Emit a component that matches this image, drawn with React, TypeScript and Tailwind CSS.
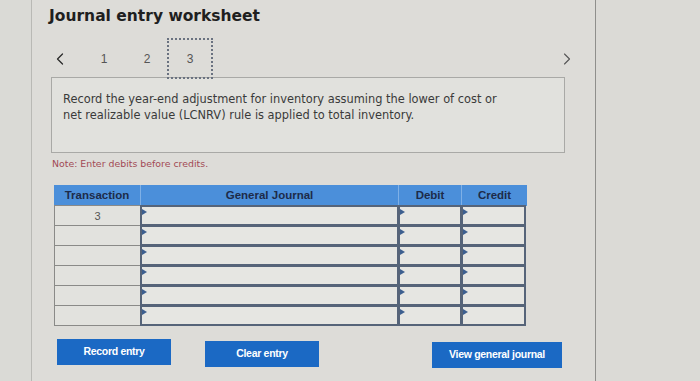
import { ChevronLeft, ChevronRight } from "lucide-react";

const rows = ["3", "", "", "", "", ""];

const Marker = () => (
  <span className="absolute left-0 top-[2px] w-0 h-0 border-y-[3px] border-y-transparent border-l-[5px] border-l-[#3d5f8f]" />
);

const InputCell = ({ w }: { w: string }) => (
  <div className={`relative ${w} h-full border-2 border-[#566479] bg-[#e6e6e2] -ml-[1px]`}>
    <Marker />
  </div>
);

export default function App() {
  return (
    <div className="w-[700px] h-[381px] bg-[#dadad6] flex overflow-hidden font-['DejaVu_Sans',sans-serif]">
      <div className="w-[32px] shrink-0 border-r border-[#b9b9b5]" />
      <div className="w-[564px] shrink-0 border-r border-[#8f8f8c] bg-[#dddcd8] flex flex-col">
        <h1 className="mt-[5px] ml-[17px] text-[15.5px] leading-[23px] font-bold text-[#1f1f1f]">
          Journal entry worksheet
        </h1>

        <div className="mt-[10px] ml-[18px] mr-[18px] h-[41px] flex items-center text-[12px] text-[#555] font-['Liberation_Sans',sans-serif]">
          <ChevronLeft className="w-[20px] h-[20px] text-[#2a2a2a]" strokeWidth={1.5} />
          <span className="ml-[30px] w-[8px] text-center">1</span>
          <span className="ml-[35px] w-[8px] text-center">2</span>
          <span className="ml-[16px] w-[46px] h-[41px] border-2 border-dotted border-[#6a7280] flex items-center justify-center relative z-10">
            3
          </span>
          <ChevronRight className="ml-auto w-[20px] h-[20px] text-[#555]" strokeWidth={1.3} />
        </div>

        <div className="-mt-[2px] ml-[19px] w-[514px] h-[76px] border border-[#a9a9a6] bg-[#e1e1dd] pl-[11px] pt-[13px] text-[11.4px] leading-[16px] text-[#3a3a3a]">
          <p>Record the year-end adjustment for inventory assuming the lower of cost or</p>
          <p>net realizable value (LCNRV) rule is applied to total inventory.</p>
        </div>

        <p className="mt-[4px] ml-[20px] text-[9.4px] text-[#a24a55]">Note: Enter debits before credits.</p>

        <div className="mt-[14px] ml-[22px] w-[473px] font-['Liberation_Sans',sans-serif]">
          <div className="flex h-[21px] bg-[#4b8fda] text-[11.5px] font-bold text-[#1d2b49]">
            <div className="w-[87px] flex items-center justify-center border-r border-[#7fb0e6]">Transaction</div>
            <div className="w-[258px] flex items-center justify-center border-r border-[#7fb0e6]">General Journal</div>
            <div className="w-[63px] flex items-center justify-center border-r border-[#7fb0e6]">Debit</div>
            <div className="w-[65px] flex items-center justify-center">Credit</div>
          </div>
          {rows.map((r, i) => (
            <div key={i} className="flex h-[21px] -mt-[1px]">
              <div className="w-[87px] h-full border border-[#8a8a88] bg-[#e2e2de] text-[11px] text-[#555] flex items-start justify-center pt-[2px]">
                {r}
              </div>
              <InputCell w="w-[259px]" />
              <InputCell w="w-[64px]" />
              <InputCell w="w-[65px]" />
            </div>
          ))}
        </div>

        <div className="mt-[13px] flex items-start font-['Liberation_Sans',sans-serif] text-[10.5px] font-bold text-white">
          <button className="ml-[25px] w-[114px] h-[26px] bg-[#1b69c4] tracking-[-0.3px]">Record entry</button>
          <button className="ml-[34px] mt-[2px] w-[114px] h-[26px] bg-[#1b69c4] tracking-[-0.3px]">Clear entry</button>
          <button className="ml-[113px] mt-[3px] w-[130px] h-[26px] bg-[#1b69c4] tracking-[-0.3px]">View general journal</button>
        </div>
      </div>
      <div className="flex-1 bg-[#dbdad6]" />
    </div>
  );
}
